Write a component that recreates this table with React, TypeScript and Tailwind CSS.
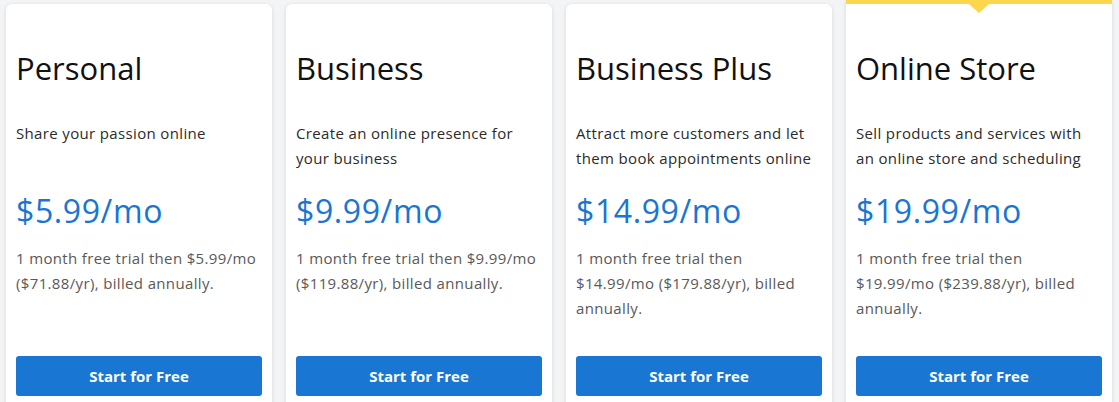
import React from 'react'

type Plan = {
  name: string
  blurb: string
  price: string
  note: string
  featured?: boolean
}

const plans: Plan[] = [
  {
    name: 'Personal',
    blurb: 'Share your passion online',
    price: '$5.99/mo',
    note: '1 month free trial then $5.99/mo ($71.88/yr), billed annually.',
  },
  {
    name: 'Business',
    blurb: 'Create an online presence for your business',
    price: '$9.99/mo',
    note: '1 month free trial then $9.99/mo ($119.88/yr), billed annually.',
  },
  {
    name: 'Business Plus',
    blurb: 'Attract more customers and let them book appointments online',
    price: '$14.99/mo',
    note: '1 month free trial then $14.99/mo ($179.88/yr), billed annually.',
  },
  {
    name: 'Online Store',
    blurb: 'Sell products and services with an online store and scheduling',
    price: '$19.99/mo',
    note: '1 month free trial then $19.99/mo ($239.88/yr), billed annually.',
    featured: true,
  },
]

const PlanCard = ({ plan }: { plan: Plan }) => {
  return (
    <div
      className={
        plan.featured
          ? 'relative -mt-[4px] flex flex-col bg-white border-t-[4px] border-[#fed64b] rounded-b-md shadow-[0_1px_4px_rgba(0,0,0,0.12)] px-[10px] pt-[44px] pb-[30px]'
          : 'relative flex flex-col bg-white rounded-md shadow-[0_1px_4px_rgba(0,0,0,0.12)] px-[10px] pt-[44px] pb-[30px]'
      }>
      {plan.featured && (
        <div className="absolute left-1/2 -translate-x-1/2 top-0 w-0 h-0 border-l-[10px] border-r-[10px] border-t-[9px] border-l-transparent border-r-transparent border-t-[#fed64b]" />
      )}
      <h2 className="text-[31px] leading-[40px] text-[#111] font-normal">{plan.name}</h2>
      <p className="mt-[33px] min-h-[50px] text-[15px] leading-[25px] tracking-[0.35px] text-[#2b2b2b]">{plan.blurb}</p>
      <p className="mt-[20px] text-[32px] leading-[40px] tracking-[0.6px] text-[#1976d2]">{plan.price}</p>
      <p className="mt-[15px] min-h-[75px] text-[15px] leading-[25px] tracking-[0.35px] text-[#595959]">{plan.note}</p>
      <button className="mt-[35px] h-[40px] w-full rounded-[3px] bg-[#1976d2] text-white text-[15px] font-bold">
        Start for Free
      </button>
    </div>
  )
}

export default function App() {
  return (
    <div className="min-h-screen bg-[#f3f4f5] font-['Open_Sans',sans-serif]">
      <div className="grid grid-cols-[repeat(4,266px)] gap-[14px] px-[6px] pt-[4px]">
        {plans.map((plan) => (
          <PlanCard key={plan.name} plan={plan} />
        ))}
      </div>
    </div>
  )
}
